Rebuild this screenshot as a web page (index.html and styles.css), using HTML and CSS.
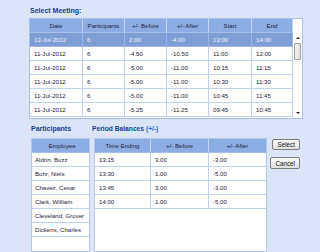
FILE: index.html
```html
<!DOCTYPE html>
<html>
<head>
<meta charset="utf-8">
<link rel="stylesheet" href="styles.css">
</head>
<body>
<div class="page">
  <div class="title">Select Meeting:</div>
  <div class="grid-panel">
    <div class="grid meetings">
      <div class="row head">
        <div class="cell">Date</div><div class="cell">Participants</div><div class="cell">+/- Before</div><div class="cell">+/- After</div><div class="cell">Start</div><div class="cell">End</div>
      </div>
      <div class="row sel">
        <div class="cell">12-Jul-2012</div><div class="cell">6</div><div class="cell">2.00</div><div class="cell">-4.00</div><div class="cell">13:00</div><div class="cell">14:00</div>
      </div>
      <div class="row">
        <div class="cell">11-Jul-2012</div><div class="cell">6</div><div class="cell">-4.50</div><div class="cell">-10.50</div><div class="cell">11:00</div><div class="cell">12:00</div>
      </div>
      <div class="row">
        <div class="cell">11-Jul-2012</div><div class="cell">6</div><div class="cell">-5.00</div><div class="cell">-11.00</div><div class="cell">10:15</div><div class="cell">11:15</div>
      </div>
      <div class="row">
        <div class="cell">11-Jul-2012</div><div class="cell">6</div><div class="cell">-5.00</div><div class="cell">-11.00</div><div class="cell">10:30</div><div class="cell">11:30</div>
      </div>
      <div class="row">
        <div class="cell">11-Jul-2012</div><div class="cell">6</div><div class="cell">-5.00</div><div class="cell">-11.00</div><div class="cell">10:45</div><div class="cell">11:45</div>
      </div>
      <div class="row">
        <div class="cell">11-Jul-2012</div><div class="cell">6</div><div class="cell">-5.25</div><div class="cell">-11.25</div><div class="cell">09:45</div><div class="cell">10:45</div>
      </div>
    </div>
    <div class="scrollbar">
      <div class="arrow"><span class="tri up"></span></div>
      <div class="thumb"></div>
      <div class="track"></div>
      <div class="arrow"><span class="tri down"></span></div>
    </div>
  </div>

  <div class="lower">
    <div class="participants">
      <div class="title">Participants</div>
      <div class="list-panel">
        <div class="row head"><div class="cell">Employee</div></div>
        <div class="row"><div class="cell">Aldrin, Buzz</div></div>
        <div class="row"><div class="cell">Bohr, Niels</div></div>
        <div class="row"><div class="cell">Chavez, Cesar</div></div>
        <div class="row"><div class="cell">Clark, William</div></div>
        <div class="row"><div class="cell">Cleveland, Grover</div></div>
        <div class="row"><div class="cell">Dickens, Charles</div></div>
      </div>
    </div>
    <div class="balances">
      <div class="title">Period Balances <span class="pm">(+/-)</span></div>
      <div class="list-panel">
        <div class="row head">
          <div class="cell">Time Ending</div><div class="cell">+/- Before</div><div class="cell">+/- After</div>
        </div>
        <div class="row"><div class="cell">13:15</div><div class="cell">3.00</div><div class="cell">-3.00</div></div>
        <div class="row"><div class="cell">13:30</div><div class="cell">1.00</div><div class="cell">-5.00</div></div>
        <div class="row"><div class="cell">13:45</div><div class="cell">3.00</div><div class="cell">-3.00</div></div>
        <div class="row"><div class="cell">14:00</div><div class="cell">1.00</div><div class="cell">-5.00</div></div>
      </div>
    </div>
    <div class="buttons">
      <button class="btn btn-select">Select</button>
      <button class="btn btn-cancel">Cancel</button>
    </div>
  </div>
</div>
</body>
</html>
```
FILE: styles.css
```css
* { box-sizing: border-box; margin: 0; padding: 0; }
html, body { width: 320px; height: 252px; overflow: hidden; }
body {
  background: #dbe5f7;
  font-family: "Liberation Sans", Arial, sans-serif;
  font-size: 6.1px;
  color: #1e2435;
}
.page { padding: 6px 0 0 30px; }
.title {
  font-size: 7px;
  font-weight: bold;
  color: #1b3b8b;
  line-height: 10px;
  height: 10px;
  white-space: nowrap;
}
.balances .title { font-size: 6.7px; }
.pm { color: #2a62dc; }

.grid-panel {
  display: flex;
  width: 274px;
  margin: 2px 0 0 -1px;
  border: 1px solid #a9c1ea;
  background: #fff;
  padding-bottom: 1px;
}
.grid { width: 263px; }
.row {
  display: grid;
  height: 14px;
  border-bottom: 1px solid #bfd1ee;
}
.meetings .row { grid-template-columns: 53px 42px 42px 42px 43px 41px; }
.cell {
  border-right: 1px solid #bfd1ee;
  padding-left: 4px;
  line-height: 13px;
  white-space: nowrap;
  overflow: hidden;
}
.head { background: #8cade4; border-bottom-color: #a6bfe9; }
.head .cell {
  text-align: center;
  padding: 0;
  border-right-color: #c6d6f2;
  color: #1b2540;
}
.sel { background: #7e9fd6; border-bottom-color: #9db6e2; }
.sel .cell { color: #eef3fc; border-right-color: #9db6e2; }

.scrollbar {
  flex: 1;
  display: flex;
  flex-direction: column;
  padding-top: 14px;
}
.arrow {
  height: 9px;
  display: flex;
  align-items: center;
  justify-content: center;
}
.tri {
  width: 0;
  height: 0;
  border-left: 2px solid transparent;
  border-right: 2px solid transparent;
}
.tri.up { border-bottom: 2px solid #222; }
.tri.down { border-top: 2px solid #222; }
.thumb {
  height: 17px;
  margin: 1px 1px 0;
  background: linear-gradient(90deg, #f2f2f2, #dcdcdc);
  border: 1px solid #a4a4a4;
  border-radius: 1px;
}
.track { flex: 1; }

.lower {
  display: flex;
  margin-top: 5px;
  padding-left: 1px;
}
.participants { width: 59px; }
.balances { width: 173px; margin-left: 4px; }
.balances .title { margin-left: -2px; }
.list-panel {
  margin-top: 4px;
  height: 114px;
  border: 1px solid #b3c8eb;
  background: #fff;
}
.participants .row { grid-template-columns: 1fr; }
.participants .cell { border-right: none; padding-left: 3px; }
.balances .row { grid-template-columns: 56px 58px 1fr; }
.balances .row .cell:last-child { border-right: none; }

.buttons {
  width: 31px;
  margin-left: 2px;
  padding-top: 15px;
  display: flex;
  flex-direction: column;
  align-items: flex-end;
}
.btn {
  font-family: "Liberation Sans", Arial, sans-serif;
  font-size: 6.3px;
  color: #111;
  background: linear-gradient(#fbfbfb, #e0e0e0);
  border: 1px solid #7c7c7c;
  border-radius: 2px;
  padding: 0 4px;
  line-height: 9px;
}
.btn-select { height: 11px; }
.btn-cancel { height: 12px; margin-top: 7px; }
```
